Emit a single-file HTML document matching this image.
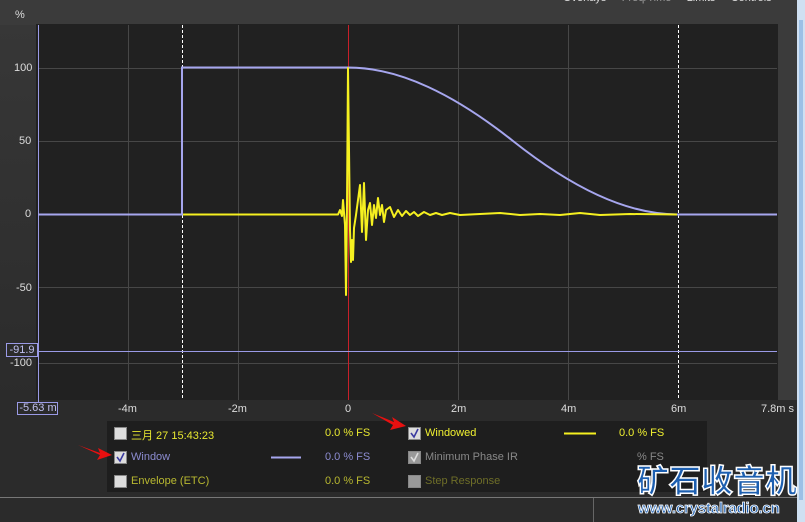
<!DOCTYPE html>
<html><head><meta charset="utf-8"><style>
html,body{margin:0;padding:0}
body{width:805px;height:522px;overflow:hidden;background:#3a3a3a;position:relative;font-family:"Liberation Sans","Noto Sans CJK SC",sans-serif}
.t{position:absolute;font-size:11px;white-space:nowrap}
</style></head><body>
<svg width="805" height="522" style="position:absolute;left:0;top:0" xmlns="http://www.w3.org/2000/svg">
<defs><linearGradient id="g" x1="0" x2="0" y1="0" y2="1"><stop offset="0" stop-color="#373737"/><stop offset="1" stop-color="#2b2b2b"/></linearGradient></defs>
<rect x="0" y="0" width="805" height="522" fill="#3b3b3b"/>
<rect x="0" y="25" width="36" height="375" fill="url(#g)"/>
<rect x="0" y="400" width="797" height="97" fill="#2b2b2b"/>
<rect x="0" y="497" width="805" height="25" fill="#2b2b2b"/>
<line x1="0" y1="497.5" x2="800" y2="497.5" stroke="#777"/>
<line x1="593.5" y1="498" x2="593.5" y2="522" stroke="#666"/>
<rect x="797" y="0" width="8" height="522" fill="#cfe0f2"/>
<rect x="799" y="20" width="4" height="480" fill="#9cc0e6"/>
<rect x="36" y="24" width="742" height="376" fill="#212121"/>
<g stroke="#474747" stroke-width="1">
<line x1="128.5" y1="25" x2="128.5" y2="400"/><line x1="238.5" y1="25" x2="238.5" y2="400"/>
<line x1="458.5" y1="25" x2="458.5" y2="400"/><line x1="568.5" y1="25" x2="568.5" y2="400"/>
<line x1="38" y1="68.5" x2="777" y2="68.5"/><line x1="38" y1="141.5" x2="777" y2="141.5"/>
<line x1="38" y1="287.5" x2="777" y2="287.5"/><line x1="38" y1="363.5" x2="777" y2="363.5"/>
</g>
<line x1="348.5" y1="25" x2="348.5" y2="400" stroke="#c8202a"/>
<line x1="182.5" y1="25" x2="182.5" y2="400" stroke="#fff" stroke-dasharray="3,2"/>
<line x1="678.5" y1="25" x2="678.5" y2="400" stroke="#fff" stroke-dasharray="3,2"/>
<line x1="38.5" y1="25" x2="38.5" y2="402" stroke="#9a9ae6"/>
<line x1="38" y1="351.5" x2="777" y2="351.5" stroke="#9a9ae6"/>
<path fill="none" stroke="#a6a6ee" stroke-width="2" d="M38 214.5 H182 V67.5 H348 C400 67.5 455 95 513 141 C571 187 626 214.5 678 214.5 H777"/>
<polyline fill="none" stroke="#f5f020" stroke-width="2" stroke-linejoin="round" points="183,214.5 338,214.5 340,210 342,216 343,200 345,225 346,295 347,205 348,68 349,150 350,230 351,262 352,240 353,260 354,228 356,215 358,200 360,185 362,232 364,183 366,240 368,210 370,203 372,225 374,205 376,218 378,198 380,215 382,205 384,222 386,210 390,207 394,217 398,210 402,216 406,211 410,215 414,212 418,216 424,212 430,215 436,213 442,215 450,213 460,215 480,214 500,213 520,215 540,214 560,215 580,213 600,215 630,214 677,214.5"/>
<rect x="107" y="421" width="600" height="71" fill="#1e1e1e"/>
<rect x="6.5" y="343.5" width="31" height="13" fill="#2b2b2b" stroke="#9a9ae6"/>
<rect x="17.5" y="402.5" width="40" height="12" fill="none" stroke="#9a9ae6"/>
<g fill="#ddd" stroke="#888">
<rect x="114.5" y="427.5" width="12" height="12"/><rect x="114.5" y="451.5" width="12" height="12"/><rect x="114.5" y="475.5" width="12" height="12"/>
<rect x="408.5" y="427.5" width="12" height="12"/><rect x="408.5" y="451.5" width="12" height="12" fill="#999"/><rect x="408.5" y="475.5" width="12" height="12" fill="#999"/>
</g>
<path d="M117 457l3 4 4-8" stroke="#3a3aa0" stroke-width="1.6" fill="none"/>
<path d="M411 433l3 4 4-8" stroke="#3a3aa0" stroke-width="1.6" fill="none"/>
<path d="M411 457l3 4 4-8" stroke="#ddd" stroke-width="1.6" fill="none"/>
<line x1="564" y1="433.5" x2="596" y2="433.5" stroke="#f5f020" stroke-width="2"/>
<line x1="271" y1="457.5" x2="301" y2="457.5" stroke="#a6a6ee" stroke-width="2"/>
<path d="M78 445 L100 453 L98 448 L112 455 L97 460 L100 455Z" fill="#e81010"/>
<path d="M372 413 L394 422 L392 417 L406 426 L390 430 L393 425Z" fill="#e81010"/>
</svg>
<div class="t" style="left:15px;top:9px;color:#ddd">%</div>
<div class="t" style="left:563px;top:-8px;color:#ddd;font-size:11px">Overlays &nbsp;&nbsp;&nbsp;&nbsp;<span style="color:#999">Freq/Time</span> &nbsp;&nbsp;&nbsp;&nbsp;Limits &nbsp;&nbsp;&nbsp;&nbsp;Controls</div>
<div class="t" style="left:14px;top:62px;color:#ddd">100</div>
<div class="t" style="left:19px;top:135px;color:#ddd">50</div>
<div class="t" style="left:25px;top:208px;color:#ddd">0</div>
<div class="t" style="left:16px;top:282px;color:#ddd">-50</div>
<div class="t" style="left:10px;top:357px;color:#ddd">-100</div>
<div class="t" style="left:7px;top:344px;color:#c0c0f0;width:30px;text-align:center">-91.9</div>
<div class="t" style="left:18px;top:402px;color:#c0c0f0;width:40px;text-align:center">-5.63 m</div>
<div class="t" style="left:118px;top:403px;color:#ddd">-4m</div>
<div class="t" style="left:228px;top:403px;color:#ddd">-2m</div>
<div class="t" style="left:345px;top:403px;color:#ddd">0</div>
<div class="t" style="left:451px;top:403px;color:#ddd">2m</div>
<div class="t" style="left:561px;top:403px;color:#ddd">4m</div>
<div class="t" style="left:671px;top:403px;color:#ddd">6m</div>
<div class="t" style="left:761px;top:403px;color:#ddd">7.8m s</div>
<div class="t" style="left:131px;top:427px;color:#e8e830">三月 27 15:43:23</div>
<div class="t" style="left:131px;top:451px;color:#8c8cd0">Window</div>
<div class="t" style="left:131px;top:475px;color:#b8b830">Envelope (ETC)</div>
<div class="t" style="left:325px;top:427px;color:#e8e830">0.0 % FS</div>
<div class="t" style="left:325px;top:451px;color:#8c8cd0">0.0 % FS</div>
<div class="t" style="left:325px;top:475px;color:#b8b830">0.0 % FS</div>
<div class="t" style="left:425px;top:427px;color:#f0f030">Windowed</div>
<div class="t" style="left:425px;top:451px;color:#888">Minimum Phase IR</div>
<div class="t" style="left:425px;top:475px;color:#6e6e28">Step Response</div>
<div class="t" style="left:619px;top:427px;color:#f0f030">0.0 % FS</div>
<div class="t" style="left:637px;top:451px;color:#888">% FS</div>
<div class="t" style="left:637px;top:461px;color:#1d5fb0;font-size:32px;font-weight:bold;letter-spacing:0;font-family:'WenQuanYi Zen Hei','Noto Sans CJK SC',sans-serif;-webkit-text-stroke:1.5px #fff;line-height:36px">矿石收音机</div>
<div class="t" style="left:638px;top:500px;color:#1d5fb0;font-size:15px;font-weight:bold;-webkit-text-stroke:0.8px #fff;letter-spacing:-0.2px;transform:scaleX(1.0)">www.crystalradio.cn</div>
</body></html>
